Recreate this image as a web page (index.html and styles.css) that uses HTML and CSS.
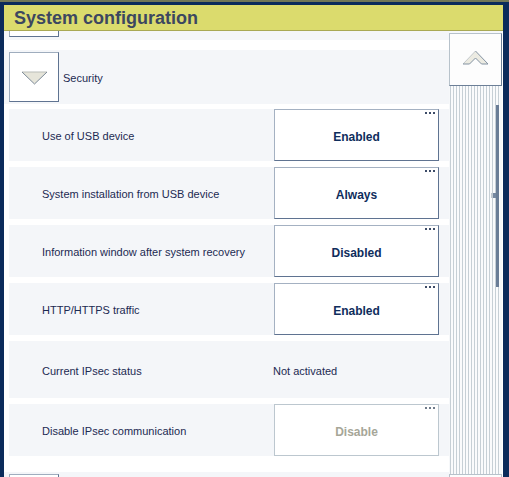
FILE: index.html
```html
<!DOCTYPE html>
<html>
<head>
<meta charset="utf-8">
<title>System configuration</title>
<link rel="stylesheet" href="styles.css">
</head>
<body>
<div class="window">
  <header class="titlebar"><h1>System configuration</h1></header>
  <div class="main">
    <div class="content">
      <div class="section partial"><div class="toggle cut"></div></div>
      <div class="section">
        <div class="toggle">
          <svg width="27" height="14" viewBox="0 0 27 14"><polygon points="1,1 26,1 13.5,13" fill="#e6e5da"/><path d="M1,1 L26,1" stroke="#b9bdb8" stroke-width="1"/><path d="M1,1 L13.5,13 L26,1" fill="none" stroke="#7c8a98" stroke-width="1"/></svg>
        </div>
        <span class="section-label">Security</span>
      </div>
      <div class="row">
        <span class="label">Use of USB device</span>
        <div class="value-btn"><span class="more"></span>Enabled</div>
      </div>
      <div class="row">
        <span class="label">System installation from USB device</span>
        <div class="value-btn"><span class="more"></span>Always</div>
      </div>
      <div class="row">
        <span class="label">Information window after system recovery</span>
        <div class="value-btn"><span class="more"></span>Disabled</div>
      </div>
      <div class="row">
        <span class="label">HTTP/HTTPS traffic</span>
        <div class="value-btn"><span class="more"></span>Enabled</div>
      </div>
      <div class="row tall">
        <span class="label">Current IPsec status</span>
        <span class="value-text">Not activated</span>
      </div>
      <div class="row">
        <span class="label">Disable IPsec communication</span>
        <div class="value-btn disabled"><span class="more"></span>Disable</div>
      </div>
      <div class="section next"><div class="toggle"></div></div>
    </div>
    <div class="scrollbar">
      <div class="scroll-up">
        <svg width="28" height="16" viewBox="0 0 28 16"><polygon points="1,14 13.5,1 26,14 19.5,14 13.5,8 7.5,14" fill="#ecebe2" stroke="none"/><path d="M1,14 L13.5,1" stroke="#c4c9cc" fill="none"/><path d="M13.5,1 L26,14 L19.5,14 L13.5,8 L7.5,14 L1,14" stroke="#8392a2" fill="none"/></svg>
      </div>
      <div class="track">
        <div class="thumb"><span class="grip"></span></div>
      </div>
      <div class="scroll-down"></div>
    </div>
  </div>
</div>
</body>
</html>
```
FILE: styles.css
```css
html, body {
  margin: 0;
  padding: 0;
}
body {
  width: 509px;
  height: 477px;
  overflow: hidden;
  background: #717757;
  font-family: "Liberation Sans", Arial, sans-serif;
}
.window {
  margin-top: 2px;
  height: 475px;
  background: #ffffff;
  border-top: 3px solid #0b2b5b;
  border-left: 4px solid #0b2b5b;
  border-right: 6px solid #0b2b5b;
  box-sizing: border-box;
  display: flex;
  flex-direction: column;
}
.titlebar {
  height: 25px;
  background: #dbdb6d;
  border-bottom: 1px solid #a9a955;
  flex: none;
}
.titlebar h1 {
  margin: 0;
  padding: 2px 0 0 10px;
  line-height: 23px;
  font-size: 18px;
  font-weight: bold;
  color: #3c4760;
}
.main {
  flex: 1;
  display: flex;
  min-height: 0;
}
.content {
  width: 445px;
  flex: none;
  overflow: hidden;
  display: flex;
  flex-direction: column;
  background: #ffffff;
}
.section {
  flex: none;
  height: 54px;
  background: #f4f6f9;
  display: flex;
  align-items: flex-start;
  padding: 2px 5px;
  box-sizing: border-box;
  margin-top: 10px;
}
.section.partial {
  height: 9px;
  margin-top: 0;
  padding: 0 5px;
}
.section.next {
  margin-top: 16px;
}
.toggle {
  width: 50px;
  height: 50px;
  box-sizing: border-box;
  background: #ffffff;
  border: 1px solid #9fadbe;
  border-right-color: #5f7391;
  border-bottom-color: #5f7391;
  display: flex;
  align-items: center;
  justify-content: center;
  flex: none;
}
.toggle svg {
  margin-top: 2px;
}
.toggle.cut {
  height: 6px;
  border-top: none;
}
.section-label {
  align-self: center;
  margin-left: 4px;
  padding-top: 2px;
  font-size: 11px;
  color: #1c2a52;
}
.row {
  flex: none;
  margin: 5px 0 0 5px;
  height: 52px;
  background: #f4f6f9;
  display: flex;
  align-items: center;
}
.row + .row {
  margin-top: 6px;
}
.row.tall {
  height: 57px;
}
.row.tall + .row {
  margin-top: 6px;
}
.label {
  width: 265px;
  box-sizing: border-box;
  padding: 2px 0 0 33px;
  font-size: 11px;
  color: #1c2a52;
  flex: none;
}
.value-text {
  margin-left: -1px;
  padding-top: 2px;
  font-size: 11px;
  color: #1c2a52;
}
.value-btn {
  position: relative;
  width: 165px;
  height: 52px;
  box-sizing: border-box;
  padding-top: 3px;
  background: #ffffff;
  border: 1px solid #a4b1c2;
  border-right-color: #5f7391;
  border-bottom-color: #5f7391;
  display: flex;
  align-items: center;
  justify-content: center;
  font-size: 12px;
  font-weight: bold;
  color: #0f2d5c;
}
.value-btn.disabled {
  border-color: #bcc7cf;
  color: #a6a698;
}
.more {
  position: absolute;
  top: 2px;
  right: 3px;
  width: 10px;
  height: 2px;
  background: linear-gradient(to right, #3d4c68 0 2px, transparent 2px 4px, #3d4c68 4px 6px, transparent 6px 8px, #3d4c68 8px 10px);
}
.value-btn.disabled .more {
  background: linear-gradient(to right, #6e7a8a 0 2px, transparent 2px 4px, #6e7a8a 4px 6px, transparent 6px 8px, #6e7a8a 8px 10px);
}
.scrollbar {
  width: 53px;
  flex: none;
  display: flex;
  flex-direction: column;
  padding-top: 2px;
  box-sizing: border-box;
  background: #f6f8fa;
}
.scroll-up {
  flex: none;
  height: 53px;
  box-sizing: border-box;
  background: #fdfdfd;
  border: 1px solid #b7c2cb;
  border-right-color: #6c7f97;
  border-bottom-color: #6c7f97;
  display: flex;
  align-items: center;
  justify-content: center;
}
.scroll-up svg {
  margin-top: -3px;
  margin-left: 1px;
}
.track {
  flex: 1;
  margin: 0 2px 0 1px;
  background: repeating-linear-gradient(to right, #c6cfd5 0 1px, #fafbfc 1px 3px);
  display: flex;
  flex-direction: column;
  align-items: flex-end;
  padding-top: 19px;
}
.thumb {
  position: relative;
  width: 3px;
  height: 182px;
  margin-right: 1px;
  background: #6a7d96;
}
.grip {
  position: absolute;
  top: 88px;
  left: -5px;
  width: 5px;
  height: 5px;
  background: linear-gradient(to right, #c0c8d0 0 2px, #7588a0 2px 5px);
}
.scroll-down {
  flex: none;
  height: 2px;
  border: 1px solid #b7c2cb;
  border-bottom: none;
  background: #fdfdfd;
}
```
